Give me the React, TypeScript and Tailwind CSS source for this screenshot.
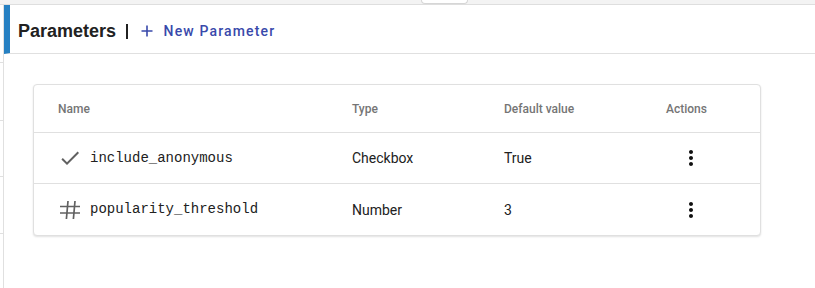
const params = [
  { name: 'include_anonymous', type: 'Checkbox', value: 'True', icon: 'check' },
  { name: 'popularity_threshold', type: 'Number', value: '3', icon: 'hash' },
];

function CheckIcon() {
  return (
    <svg width="24" height="24" viewBox="0 0 24 24" className="shrink-0">
      <path d="M9 16.17L4.83 12l-1.42 1.41L9 19 21 7l-1.41-1.41z" fill="#616161" />
    </svg>
  );
}

function HashIcon() {
  return (
    <svg width="24" height="24" viewBox="0 0 24 24" className="shrink-0">
      <path
        d="M2 8.5h20M2 15h20M10 3l-1.6 18M17 3l-1.6 18"
        stroke="#616161"
        strokeWidth="1.7"
        fill="none"
      />
    </svg>
  );
}

function MoreVert() {
  return (
    <svg width="24" height="24" viewBox="0 0 24 24">
      <path
        d="M12 8c1.1 0 2-.9 2-2s-.9-2-2-2-2 .9-2 2 .9 2 2 2zm0 2c-1.1 0-2 .9-2 2s.9 2 2 2 2-.9 2-2-.9-2-2-2zm0 6c-1.1 0-2 .9-2 2s.9 2 2 2 2-.9 2-2-.9-2-2-2z"
        fill="#111"
      />
    </svg>
  );
}

export default function App() {
  return (
    <div className="w-[815px] h-[288px] bg-white overflow-hidden flex flex-col font-['Roboto',sans-serif]">
      {/* top strip with drag tab */}
      <div className="h-[5px] shrink-0 bg-[#f3f3f3] border-b border-[#dedede] flex">
        <div className="ml-[421px] w-[47px] h-[4px] bg-white border border-t-0 border-[#d6d6d6] rounded-b-[4px]" />
      </div>

      <div className="flex flex-1">
        {/* sidebar edge */}
        <div className="w-[4px] shrink-0 border-r border-[#e0e0e0] flex flex-col">
          <div className="h-[58px] border-b border-[#e0e0e0]" />
          <div className="h-[58px] border-b border-[#e0e0e0]" />
          <div className="h-[56px] border-b border-[#e0e0e0]" />
          <div className="h-[57px] border-b border-[#e0e0e0]" />
        </div>

        <div className="flex-1 flex flex-col">
          {/* header */}
          <div className="h-[49px] border-l-[6px] border-[#2680c2] border-b border-b-[#e0e0e0] flex items-center pl-2 pt-[4px]">
            <h1 className="text-[18px] font-bold text-[#212121] font-['Liberation_Sans',sans-serif]">Parameters</h1>
            <span className="ml-[10px] w-[1.5px] h-[15px] bg-[#212121]" />
            <button className="ml-[13px] flex items-center gap-[11px] text-[#3949ab]">
              <svg width="12" height="12" viewBox="0 0 12 12">
                <path d="M6 0.5v11M0.5 6h11" stroke="#3949ab" strokeWidth="1.6" />
              </svg>
              <span className="text-[14px] font-medium tracking-[1.15px]">New Parameter</span>
            </button>
          </div>

          {/* table */}
          <div className="pt-[30px] pl-[29px]">
            <div className="w-[728px] bg-white border border-[#e0e0e0] rounded-[4px] shadow-[0_1px_2px_rgba(0,0,0,0.12)]">
              <div className="grid grid-cols-[294px_152px_137px_1fr] h-[48px] items-center border-b border-[#e0e0e0] text-[12px] font-medium text-[#757575]">
                <div className="pl-6">Name</div>
                <div className="pl-6">Type</div>
                <div className="pl-6">Default value</div>
                <div className="text-center pr-1">Actions</div>
              </div>
              {params.map((p, i) => (
                <div
                  key={p.name}
                  className={`grid grid-cols-[294px_152px_137px_1fr] h-[51px] items-center text-[14px] text-[#212121] ${
                    i < params.length - 1 ? 'border-b border-[#e0e0e0]' : ''
                  }`}
                >
                  <div className="pl-6 flex items-center gap-2">
                    {p.icon === 'check' ? <CheckIcon /> : <HashIcon />}
                    <span className="font-['Liberation_Mono',monospace] text-[14px] text-[#212121]">{p.name}</span>
                  </div>
                  <div className="pl-6 pt-[1px]">{p.type}</div>
                  <div className="pl-6 pt-[1px]">{p.value}</div>
                  <div className="flex justify-center pl-1">
                    <MoreVert />
                  </div>
                </div>
              ))}
            </div>
          </div>
        </div>
      </div>
    </div>
  );
}
